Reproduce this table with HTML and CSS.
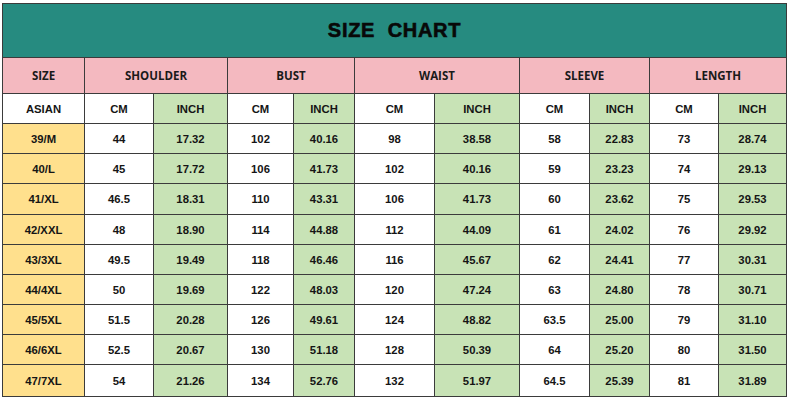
FILE: index.html
```html
<!DOCTYPE html>
<html>
<head>
<meta charset="utf-8">
<link rel="stylesheet" href="styles.css">
</head>
<body>
<div class="chart">
  <div class="title">SIZE&nbsp;&nbsp;CHART</div>

  <div class="hd">SIZE</div>
  <div class="hd span2">SHOULDER</div>
  <div class="hd span2">BUST</div>
  <div class="hd span2">WAIST</div>
  <div class="hd span2">SLEEVE</div>
  <div class="hd span2">LENGTH</div>

  <div class="w">ASIAN</div>
  <div class="w">CM</div><div class="g">INCH</div>
  <div class="w">CM</div><div class="g">INCH</div>
  <div class="w">CM</div><div class="g">INCH</div>
  <div class="w">CM</div><div class="g">INCH</div>
  <div class="w">CM</div><div class="g">INCH</div>

  <div class="y">39/M</div><div class="w">44</div><div class="g">17.32</div><div class="w">102</div><div class="g">40.16</div><div class="w">98</div><div class="g">38.58</div><div class="w">58</div><div class="g">22.83</div><div class="w">73</div><div class="g">28.74</div>
  <div class="y">40/L</div><div class="w">45</div><div class="g">17.72</div><div class="w">106</div><div class="g">41.73</div><div class="w">102</div><div class="g">40.16</div><div class="w">59</div><div class="g">23.23</div><div class="w">74</div><div class="g">29.13</div>
  <div class="y">41/XL</div><div class="w">46.5</div><div class="g">18.31</div><div class="w">110</div><div class="g">43.31</div><div class="w">106</div><div class="g">41.73</div><div class="w">60</div><div class="g">23.62</div><div class="w">75</div><div class="g">29.53</div>
  <div class="y">42/XXL</div><div class="w">48</div><div class="g">18.90</div><div class="w">114</div><div class="g">44.88</div><div class="w">112</div><div class="g">44.09</div><div class="w">61</div><div class="g">24.02</div><div class="w">76</div><div class="g">29.92</div>
  <div class="y">43/3XL</div><div class="w">49.5</div><div class="g">19.49</div><div class="w">118</div><div class="g">46.46</div><div class="w">116</div><div class="g">45.67</div><div class="w">62</div><div class="g">24.41</div><div class="w">77</div><div class="g">30.31</div>
  <div class="y">44/4XL</div><div class="w">50</div><div class="g">19.69</div><div class="w">122</div><div class="g">48.03</div><div class="w">120</div><div class="g">47.24</div><div class="w">63</div><div class="g">24.80</div><div class="w">78</div><div class="g">30.71</div>
  <div class="y">45/5XL</div><div class="w">51.5</div><div class="g">20.28</div><div class="w">126</div><div class="g">49.61</div><div class="w">124</div><div class="g">48.82</div><div class="w">63.5</div><div class="g">25.00</div><div class="w">79</div><div class="g">31.10</div>
  <div class="y">46/6XL</div><div class="w">52.5</div><div class="g">20.67</div><div class="w">130</div><div class="g">51.18</div><div class="w">128</div><div class="g">50.39</div><div class="w">64</div><div class="g">25.20</div><div class="w">80</div><div class="g">31.50</div>
  <div class="y">47/7XL</div><div class="w">54</div><div class="g">21.26</div><div class="w">134</div><div class="g">52.76</div><div class="w">132</div><div class="g">51.97</div><div class="w">64.5</div><div class="g">25.39</div><div class="w">81</div><div class="g">31.89</div>
</div>
</body>
</html>
```

FILE: styles.css
```css
html, body {
  margin: 0;
  padding: 0;
  background: #ffffff;
}

body {
  padding: 3px 0 0 2px;
  width: 790px;
  height: 400px;
  box-sizing: border-box;
  overflow: hidden;
}

.chart {
  display: grid;
  grid-template-columns: 81px 68px 73px 65px 60px 79px 84px 69px 59px 68px 67px;
  grid-template-rows: 53px 35px 29px 29px 29px 30px 29px 29px 29px 29px 29px 31px;
  gap: 1px;
  padding: 1px;
  background: #3b3b3b;
  width: max-content;
  font-family: "Liberation Sans", Arial, sans-serif;
  font-weight: bold;
  font-size: 11.3px;
  color: #151515;
}

.chart > div {
  display: flex;
  align-items: center;
  justify-content: center;
}

.title {
  grid-column: 1 / -1;
  background: #268b80;
  font-size: 20px;
  letter-spacing: 0.7px;
  color: #080808;
  -webkit-text-stroke: 0.6px #080808;
  padding-bottom: 1px;
}

.hd {
  background: #f4b9c0;
  font-family: "Open Sans", "Liberation Sans", sans-serif;
  font-weight: 700;
  font-size: 11.5px;
  color: #1a1a1a;
}

.span2 {
  grid-column: span 2;
}

.w {
  background: #ffffff;
}

.g {
  background: #c8e3b6;
}

.y {
  background: #ffe08d;
}
```
